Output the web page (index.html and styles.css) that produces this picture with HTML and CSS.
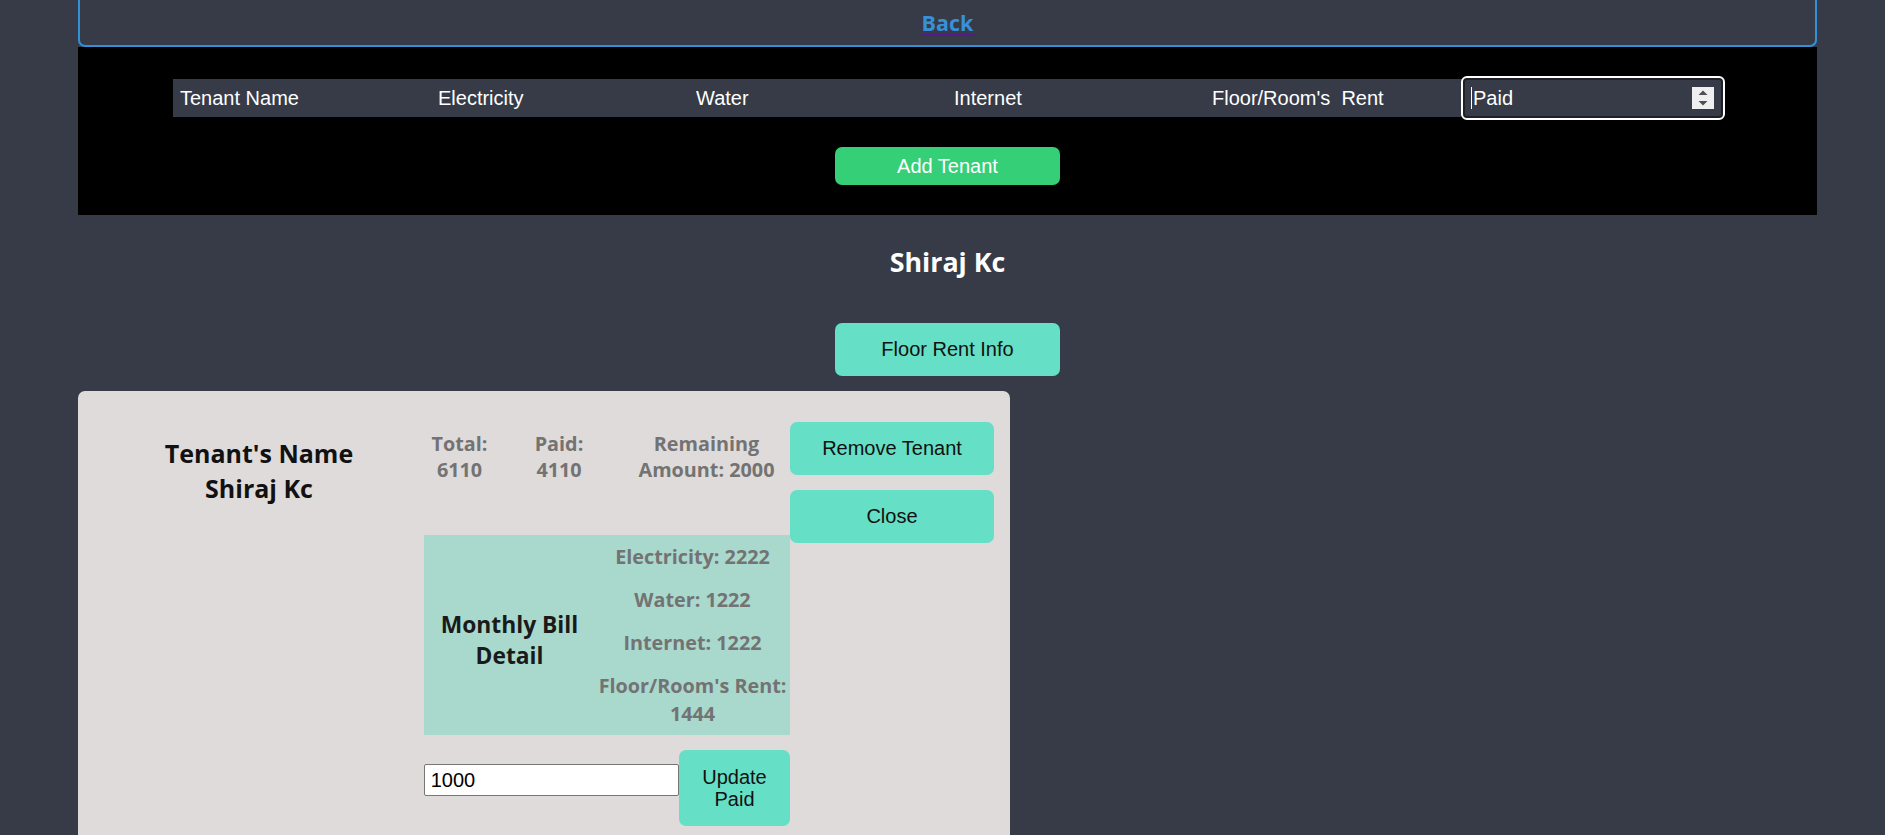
FILE: index.html
```html
<!DOCTYPE html>
<html lang="en">
<head>
<meta charset="utf-8">
<title>Tenants</title>
<link rel="stylesheet" href="styles.css">
</head>
<body>
<div class="page">
  <div class="back-bar">
    <a class="back-link" href="#"><span class="back-text">Back</span></a>
  </div>

  <section class="panel">
    <div class="field-row">
      <input class="field" type="text" placeholder="Tenant Name">
      <input class="field" type="text" placeholder="Electricity">
      <input class="field" type="text" placeholder="Water">
      <input class="field" type="text" placeholder="Internet">
      <input class="field" type="text" placeholder="Floor/Room's  Rent">
      <div class="field-focus">
        <span class="caret"></span><span class="focus-text">Paid</span>
        <svg class="spinner" width="22" height="22" viewBox="0 0 22 22">
          <rect width="22" height="22" fill="#efefef"/>
          <path d="M6.5 8 L11 3.5 L15.5 8 Z" fill="#505050"/>
          <path d="M6.5 14 L11 18.5 L15.5 14 Z" fill="#505050"/>
        </svg>
      </div>
    </div>
    <button class="btn-add">Add Tenant</button>
  </section>

  <h2 class="tenant-heading">Shiraj Kc</h2>
  <div class="center-row"><button class="btn-teal btn-floor">Floor Rent Info</button></div>

  <div class="card">
    <div class="name-col">
      <div class="name-line">Tenant's Name</div>
      <div class="name-line">Shiraj Kc</div>
    </div>
    <div class="mid-col">
      <div class="stats">
        <div class="stat">Total:<br>6110</div>
        <div class="stat">Paid:<br>4110</div>
        <div class="stat">Remaining<br>Amount: 2000</div>
      </div>
      <div class="bill">
        <div class="bill-title">Monthly Bill<br>Detail</div>
        <div class="bill-values">
          <p>Electricity: 2222</p>
          <p>Water: 1222</p>
          <p>Internet: 1222</p>
          <p>Floor/Room's Rent: 1444</p>
        </div>
      </div>
      <div class="update-row">
        <input class="paid-input" type="text" value="1000">
        <button class="btn-teal btn-update">Update<br>Paid</button>
      </div>
    </div>
    <div class="btn-col">
      <button class="btn-teal btn-side">Remove Tenant</button>
      <button class="btn-teal btn-side">Close</button>
    </div>
  </div>
</div>
</body>
</html>
```

FILE: styles.css
```css
html, body {
  margin: 0;
  padding: 0;
}
body {
  background: #363b47;
  font-family: "Liberation Sans", Arial, sans-serif;
  font-size: 20px;
  color: #111;
  overflow: hidden;
}
.page {
  margin-left: 78px;
  width: 1739px;
}

/* Back bar */
.back-bar {
  box-sizing: border-box;
  height: 47px;
  border: 2.4px solid #3290d6;
  border-top: none;
  border-radius: 0 0 7px 7px;
  display: flex;
  justify-content: center;
  line-height: 45px;
}
.back-link {
  color: #551a8b;
  text-decoration: underline;
  text-decoration-thickness: 2px;
  text-underline-offset: 3px;
  font-family: "Open Sans", sans-serif;
  font-weight: 700;
  font-size: 21.5px;
}
.back-text {
  color: #3690da;
}

/* Black panel */
.panel {
  background: #000;
  padding: 32px 0 30px;
  display: flex;
  flex-direction: column;
  align-items: center;
}
.field-row {
  display: flex;
  align-items: center;
  height: 38px;
}
.field {
  box-sizing: border-box;
  width: 258px;
  height: 38px;
  border: none;
  margin: 0;
  padding: 0 0 0 7.5px;
  background: #363b47;
  color: #fff;
  font: inherit;
  white-space: pre;
}
.field::placeholder {
  color: #fff;
  opacity: 1;
}
.field:focus {
  outline: none;
}
.field-focus {
  box-sizing: border-box;
  width: 260px;
  height: 40px;
  border: 2px solid #1d2027;
  border-radius: 4px;
  outline: 2px solid #fff;
  background: #363b47;
  color: #fff;
  display: flex;
  align-items: center;
  padding: 0 7px 0 6.5px;
}
.caret {
  width: 1px;
  height: 22px;
  background: #fff;
  margin-right: 1px;
}
.focus-text {
  flex: 1;
}
.spinner {
  display: block;
}
.btn-add {
  margin-top: 30px;
  width: 225px;
  height: 38px;
  border: none;
  border-radius: 7px;
  background: #34cf76;
  color: #fff;
  font: inherit;
  padding: 0;
}

/* Heading */
.tenant-heading {
  margin: 0;
  padding-top: 27px;
  height: 40px;
  line-height: 40px;
  text-align: center;
  color: #fff;
  font-family: "Open Sans", sans-serif;
  font-weight: 700;
  font-size: 26.8px;
}
.center-row {
  display: flex;
  justify-content: center;
  margin-top: 41px;
}
.btn-teal {
  border: none;
  border-radius: 7px;
  background: #65dfc5;
  color: #111;
  font: inherit;
  padding: 0;
}
.btn-floor {
  width: 225px;
  height: 53px;
}

/* Card */
.card {
  margin-top: 15px;
  width: 932px;
  box-sizing: border-box;
  background: #dfdbda;
  border-radius: 7px;
  padding: 31px 15px 30px 16px;
  display: flex;
  align-items: flex-start;
}
.name-col {
  width: 330px;
  padding-top: 14px;
  text-align: center;
  font-family: "Open Sans", sans-serif;
  font-weight: 700;
  font-size: 25px;
  line-height: 35px;
  color: #111;
}
.mid-col {
  width: 366px;
  display: flex;
  flex-direction: column;
}
.stats {
  height: 113px;
  box-sizing: border-box;
  padding-top: 9px;
  display: grid;
  grid-template-columns: 71px 128px 167px;
  align-items: start;
}
.stat,
.bill-values p {
  text-align: center;
  font-family: "Open Sans", sans-serif;
  font-weight: 700;
  font-size: 19.8px;
  color: #737373;
}
.stat {
  line-height: 26px;
}
.bill {
  height: 200px;
  background: #a9d8cd;
  display: flex;
}
.bill-title {
  width: 171px;
  align-self: center;
  padding-top: 10px;
  text-align: center;
  font-family: "Open Sans", sans-serif;
  font-weight: 700;
  font-size: 22.8px;
  line-height: 31px;
  color: #1a1a1a;
}
.bill-values {
  width: 195px;
  padding-top: 8px;
}
.bill-values p {
  margin: 0 0 15px;
  line-height: 28px;
}
.update-row {
  margin-top: 15px;
  display: flex;
  align-items: flex-start;
}
.paid-input {
  box-sizing: border-box;
  width: 255px;
  height: 32px;
  margin: 14px 0 0;
  border: 1px solid #767676;
  border-radius: 2px;
  background: #fff;
  color: #000;
  font: inherit;
  padding: 0 0 0 5.7px;
}
.btn-update {
  width: 111px;
  height: 76px;
  line-height: 22px;
}
.btn-col {
  width: 204px;
  display: flex;
  flex-direction: column;
  gap: 15px;
}
.btn-side {
  height: 53px;
}
```
